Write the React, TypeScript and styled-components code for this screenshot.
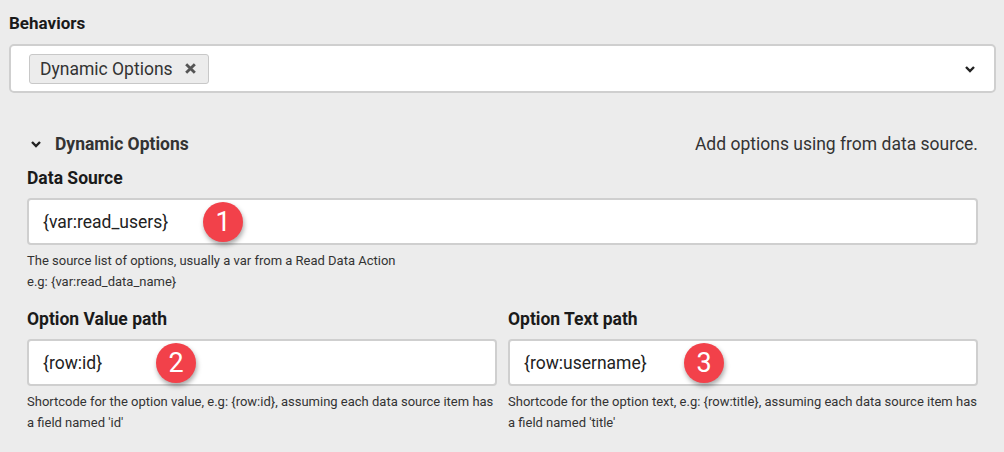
import styled, { createGlobalStyle } from "styled-components";

const GlobalStyle = createGlobalStyle`
  body {
    margin: 0;
    background: #ececec;
    font-family: Roboto, "Liberation Sans", sans-serif;
    color: #1a1a1a;
  }
`;

const Page = styled.div`
  width: 1004px;
  height: 452px;
  padding: 13px 8px 0 9px;
  box-sizing: border-box;
`;

const TopLabel = styled.div`
  font-size: 17px;
  font-weight: 700;
  height: 22px;
  margin-bottom: 9px;
`;

const SelectBox = styled.div`
  display: flex;
  align-items: center;
  justify-content: space-between;
  height: 49px;
  box-sizing: border-box;
  background: #fff;
  border: 2px solid #cfcfcf;
  border-radius: 5px;
  padding: 0 18px 0 18px;
`;

const Chip = styled.span`
  display: inline-flex;
  align-items: center;
  gap: 11px;
  height: 30px;
  box-sizing: border-box;
  padding: 0 11px 0 10px;
  background: #ececec;
  border: 1px solid #c8c8c8;
  border-radius: 3px;
  font-size: 17.5px;
  color: #333;
`;

const Section = styled.div`
  padding: 38px 18px 0 18px;
`;

const SectionHeader = styled.div`
  display: flex;
  align-items: center;
  justify-content: space-between;
  height: 26px;
  margin-bottom: 11px;
`;

const SectionTitle = styled.div`
  display: flex;
  align-items: center;
  gap: 13px;
  padding-left: 3px;
  font-size: 17.5px;
  font-weight: 700;
  color: #333;
`;

const SectionNote = styled.div`
  font-size: 17.5px;
  color: #333;
`;

const Label = styled.div`
  font-size: 17.5px;
  font-weight: 700;
  height: 23px;
  margin-bottom: 7px;
`;

const InputWrap = styled.div`
  position: relative;
`;

const Input = styled.div`
  height: 47px;
  box-sizing: border-box;
  background: #fff;
  border: 2px solid #cfcfcf;
  border-radius: 4px;
  padding: 0 14px;
  display: flex;
  align-items: center;
  font-size: 17.5px;
  color: #222;
`;

const Help = styled.div`
  font-size: 13px;
  line-height: 21px;
  color: #333;
  margin-top: 5px;
`;

const Row = styled.div`
  display: grid;
  grid-template-columns: 1fr 1fr;
  gap: 11px;
  margin-top: 17px;
`;

const Badge = styled.span<{ $left: number }>`
  position: absolute;
  left: ${(p) => p.$left}px;
  top: 50%;
  transform: translateY(-50%);
  width: 40px;
  height: 40px;
  border-radius: 50%;
  background: #f2414a;
  color: #fff;
  font-size: 27px;
  display: flex;
  align-items: center;
  justify-content: center;
  box-shadow: 1px 3px 5px rgba(0, 0, 0, 0.35);
`;

const Chevron = () => (
  <svg width="12" height="12" viewBox="0 0 12 12">
    <path d="M2 4l4 4 4-4" fill="none" stroke="#222" strokeWidth="2.4" />
  </svg>
);

const Field = ({
  label,
  value,
  badge,
  badgeLeft,
  help,
}: {
  label: string;
  value: string;
  badge: string;
  badgeLeft: number;
  help: React.ReactNode;
}) => (
  <div>
    <Label>{label}</Label>
    <InputWrap>
      <Input>{value}</Input>
      <Badge $left={badgeLeft}>{badge}</Badge>
    </InputWrap>
    <Help>{help}</Help>
  </div>
);

export default function App() {
  return (
    <Page>
      <GlobalStyle />
      <TopLabel>Behaviors</TopLabel>
      <SelectBox>
        <Chip>
          Dynamic Options
          <svg width="13" height="13" viewBox="0 0 12 12">
            <path d="M2 2l8 8M10 2l-8 8" stroke="#555" strokeWidth="2.6" />
          </svg>
        </Chip>
        <Chevron />
      </SelectBox>
      <Section>
        <SectionHeader>
          <SectionTitle>
            <Chevron />
            Dynamic Options
          </SectionTitle>
          <SectionNote>Add options using from data source.</SectionNote>
        </SectionHeader>
        <Field
          label="Data Source"
          value="{var:read_users}"
          badge="1"
          badgeLeft={176}
          help={
            <>
              The source list of options, usually a var from a Read Data Action
              <br />
              e.g: {"{var:read_data_name}"}
            </>
          }
        />
        <Row>
          <Field
            label="Option Value path"
            value="{row:id}"
            badge="2"
            badgeLeft={129}
            help="Shortcode for the option value, e.g: {row:id}, assuming each data source item has a field named 'id'"
          />
          <Field
            label="Option Text path"
            value="{row:username}"
            badge="3"
            badgeLeft={176}
            help="Shortcode for the option text, e.g: {row:title}, assuming each data source item has a field named 'title'"
          />
        </Row>
      </Section>
    </Page>
  );
}
